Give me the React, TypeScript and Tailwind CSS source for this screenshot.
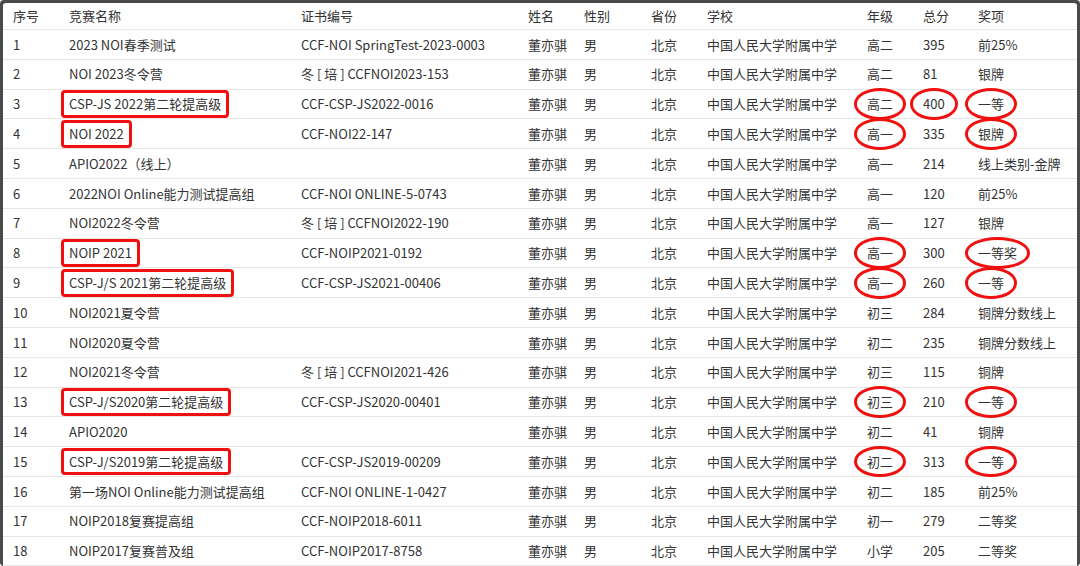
import React from "react";

type R = [string, string, string, string, string, string, string, string, string, string];
const rows: R[] = [
  ["1","2023 NOI春季测试","CCF-NOI SpringTest-2023-0003","董亦骐","男","北京","中国人民大学附属中学","高二","395","前25%"],
  ["2","NOI 2023冬令营","冬 [ 培 ] CCFNOI2023-153","董亦骐","男","北京","中国人民大学附属中学","高二","81","银牌"],
  ["3","CSP-JS 2022第二轮提高级","CCF-CSP-JS2022-0016","董亦骐","男","北京","中国人民大学附属中学","高二","400","一等"],
  ["4","NOI 2022","CCF-NOI22-147","董亦骐","男","北京","中国人民大学附属中学","高一","335","银牌"],
  ["5","APIO2022（线上）","","董亦骐","男","北京","中国人民大学附属中学","高一","214","线上类别-金牌"],
  ["6","2022NOI Online能力测试提高组","CCF-NOI ONLINE-5-0743","董亦骐","男","北京","中国人民大学附属中学","高一","120","前25%"],
  ["7","NOI2022冬令营","冬 [ 培 ] CCFNOI2022-190","董亦骐","男","北京","中国人民大学附属中学","高一","127","银牌"],
  ["8","NOIP 2021","CCF-NOIP2021-0192","董亦骐","男","北京","中国人民大学附属中学","高一","300","一等奖"],
  ["9","CSP-J/S 2021第二轮提高级","CCF-CSP-JS2021-00406","董亦骐","男","北京","中国人民大学附属中学","高一","260","一等"],
  ["10","NOI2021夏令营","","董亦骐","男","北京","中国人民大学附属中学","初三","284","铜牌分数线上"],
  ["11","NOI2020夏令营","","董亦骐","男","北京","中国人民大学附属中学","初二","235","铜牌分数线上"],
  ["12","NOI2021冬令营","冬 [ 培 ] CCFNOI2021-426","董亦骐","男","北京","中国人民大学附属中学","初三","115","铜牌"],
  ["13","CSP-J/S2020第二轮提高级","CCF-CSP-JS2020-00401","董亦骐","男","北京","中国人民大学附属中学","初三","210","一等"],
  ["14","APIO2020","","董亦骐","男","北京","中国人民大学附属中学","初二","41","铜牌"],
  ["15","CSP-J/S2019第二轮提高级","CCF-CSP-JS2019-00209","董亦骐","男","北京","中国人民大学附属中学","初二","313","一等"],
  ["16","第一场NOI Online能力测试提高组","CCF-NOI ONLINE-1-0427","董亦骐","男","北京","中国人民大学附属中学","初二","185","前25%"],
  ["17","NOIP2018复赛提高组","CCF-NOIP2018-6011","董亦骐","男","北京","中国人民大学附属中学","初一","279","二等奖"],
  ["18","NOIP2017复赛普及组","CCF-NOIP2017-8758","董亦骐","男","北京","中国人民大学附属中学","小学","205","二等奖"],
];

const boxed = new Set([3, 4, 8, 9, 13, 15]);
const ovalGrade = new Set([3, 4, 8, 9, 13, 15]);
const ovalScore = new Set([3]);
const ovalAward = new Set([3, 4, 8, 9, 13, 15]);

const Oval = ({ children }: { children: React.ReactNode }) => (
  <span className="relative inline-block">
    {children}
    <span className="absolute -left-[13px] -right-[13px] -top-[6px] -bottom-[6px] rounded-[50%] border-[3px] border-[#f01010]" />
  </span>
);

const Box = ({ children }: { children: React.ReactNode }) => (
  <span className="relative inline-block">
    {children}
    <span className="absolute -left-[8px] -right-[8px] -top-[4px] -bottom-[4px] rounded-[4px] border-[3px] border-[#f01010]" />
  </span>
);

const cols = "grid grid-cols-[56px_232px_227px_56px_67px_56px_160px_56px_55px_107px]";

export default function App() {
  return (
    <div className="w-[1080px] h-[566px] overflow-hidden bg-[#4a4a4a] p-[3px] pb-0 rounded-[4px]" style={{ fontFamily: '"Noto Sans CJK SC", "Noto Sans", sans-serif' }}>
      <div className="bg-white h-full overflow-hidden text-[13px] text-[#333] rounded-t-[3px]">
        <div className={`${cols} h-[27px] items-center border-b border-[#e6e6e6]`}>
          {["序号","竞赛名称","证书编号","姓名","性别","省份","学校","年级","总分","奖项"].map((h) => (
            <div key={h} className="pl-[10px] whitespace-nowrap">{h}</div>
          ))}
        </div>
        {rows.map((r) => {
          const n = Number(r[0]);
          return (
            <div key={r[0]} className={`${cols} h-[29.8px] items-center border-b border-[#e6e6e6]`}>
              {r.map((c, i) => {
                let content: React.ReactNode = c;
                if (i === 1 && boxed.has(n)) content = <Box>{c}</Box>;
                if (i === 7 && ovalGrade.has(n)) content = <Oval>{c}</Oval>;
                if (i === 8 && ovalScore.has(n)) content = <Oval>{c}</Oval>;
                if (i === 9 && ovalAward.has(n)) content = <Oval>{c}</Oval>;
                return (
                  <div key={i} className="pl-[10px] whitespace-nowrap">{content}</div>
                );
              })}
            </div>
          );
        })}
      </div>
    </div>
  );
}
